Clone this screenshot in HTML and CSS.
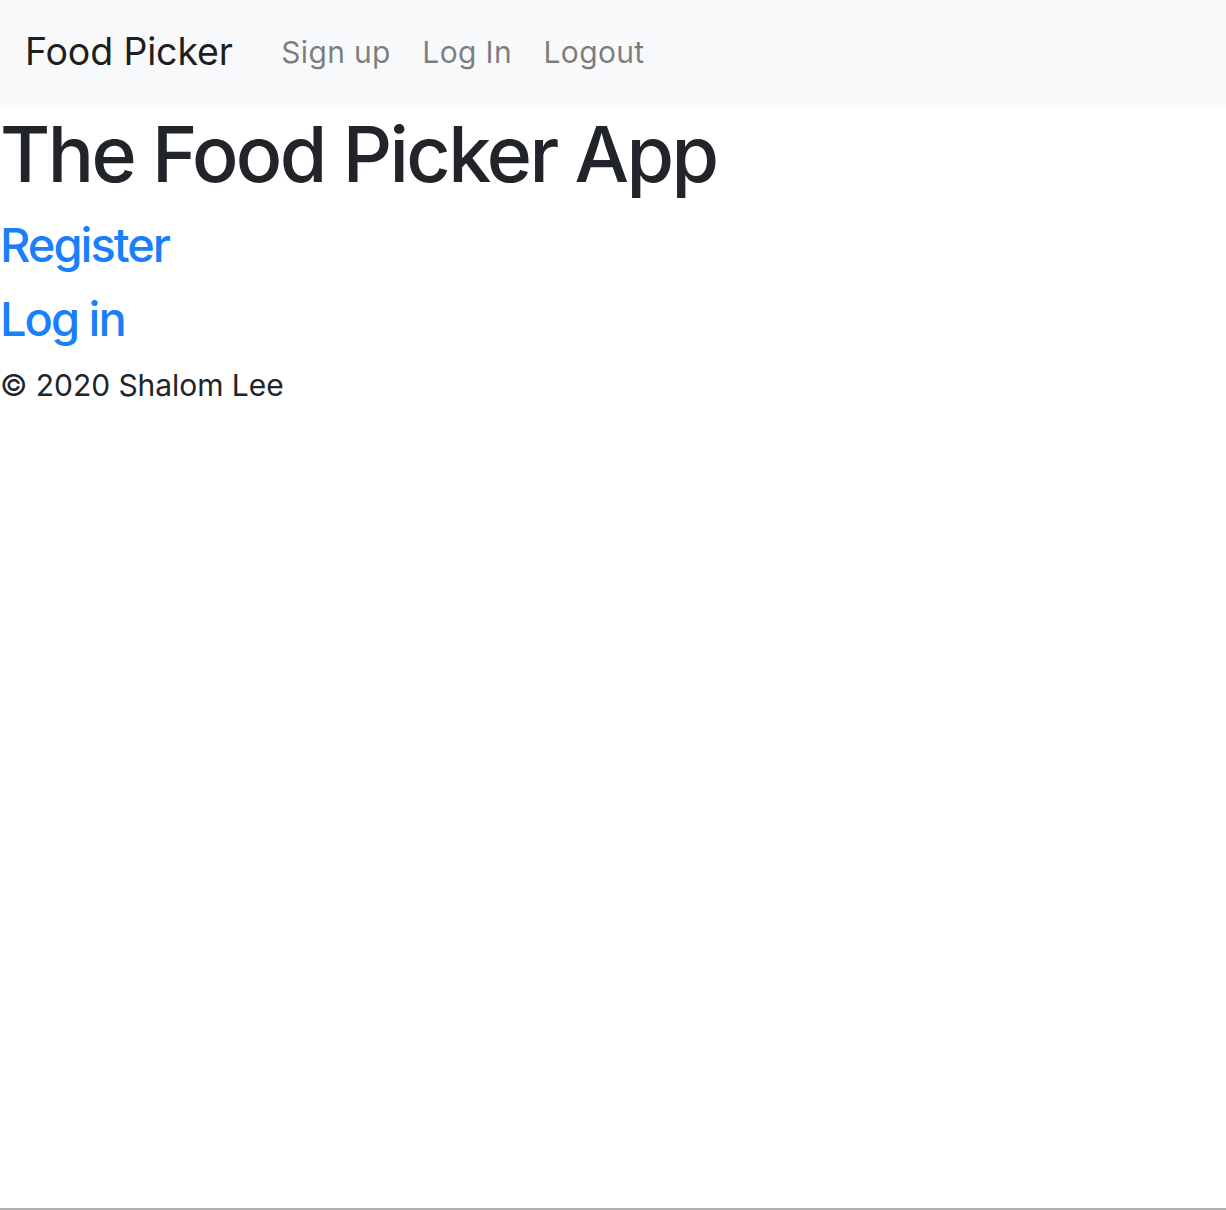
FILE: index.html
```html
<!DOCTYPE html>
<html lang="en">
<head>
<meta charset="utf-8">
<title>Food Picker</title>
<link rel="stylesheet" href="styles.css">
</head>
<body>
<nav class="navbar">
  <a class="brand" href="#">Food Picker</a>
  <ul class="nav">
    <li><a class="nav-link" href="#">Sign up</a></li>
    <li><a class="nav-link" href="#">Log In</a></li>
    <li><a class="nav-link" href="#">Logout</a></li>
  </ul>
</nav>
<main class="content">
  <h1 class="title">The Food Picker App</h1>
  <h4 class="link-head"><a href="#">Register</a></h4>
  <h4 class="link-head last"><a href="#">Log in</a></h4>
  <p class="footer">© 2020 Shalom Lee</p>
</main>
</body>
</html>
```
FILE: styles.css
```css
* { box-sizing: border-box; }
html, body { margin: 0; padding: 0; }
body {
  font-family: Inter, "Noto Sans", sans-serif;
  font-size: 30px;
  line-height: 1.5;
  color: #212529;
  background: #fff;
  min-height: 100vh;
  border-bottom: 2px solid #b0b0b0;
}
.navbar {
  display: flex;
  align-items: center;
  background: #f8f9fa;
  padding: 15px 30px 15px 25px;
  height: 105px;
}
.brand {
  font-size: 37.5px;
  line-height: 1.5;
  color: rgba(0,0,0,.9);
  text-decoration: none;
  margin-right: 33px;
  letter-spacing: -0.15px;
}
.nav {
  display: flex;
  list-style: none;
  margin: 0;
  padding: 0;
}
.nav-link {
  display: block;
  padding: 15px 16px 15px 15.5px;
  color: rgba(0,0,0,.5);
  text-decoration: none;
  letter-spacing: 0.35px;
}
.content { padding: 0; }
.title {
  font-size: 77px;
  font-weight: 500;
  line-height: 1.2;
  margin: 3px 0 17px;
  letter-spacing: -2.6px;
}
.link-head {
  font-size: 47px;
  font-weight: 500;
  line-height: 1.2;
  margin: 0 0 17px;
  letter-spacing: -2px;
}
.link-head.last { margin-bottom: 16px; }
.link-head a { color: #1a7ffb; text-decoration: none; }
.footer { margin: 0; letter-spacing: -0.05px; }
```
